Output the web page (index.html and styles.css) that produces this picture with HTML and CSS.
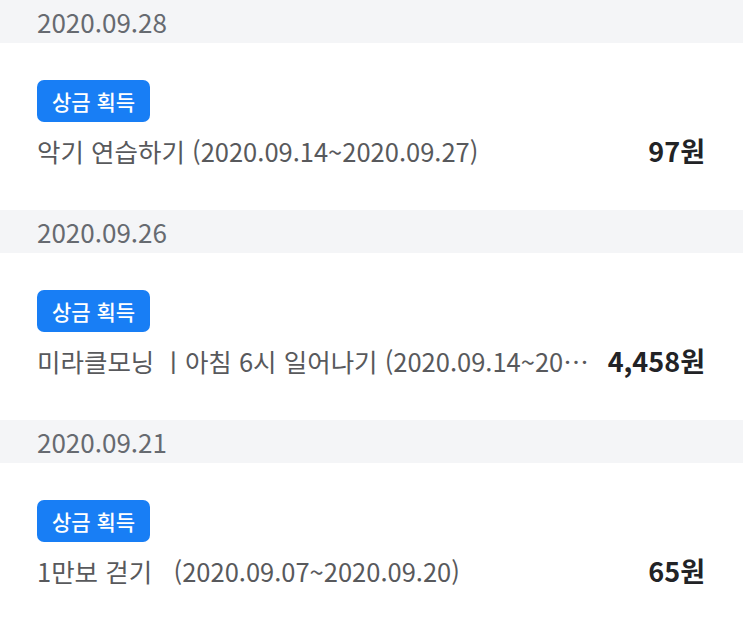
FILE: index.html
```html
<!DOCTYPE html>
<html lang="ko">
<head>
<meta charset="utf-8">
<link rel="stylesheet" href="styles.css">
</head>
<body>
<div class="list">
  <div class="date-header">2020.09.28</div>
  <div class="card">
    <span class="badge">상금 획득</span>
    <div class="row">
      <div class="title">악기 연습하기 (2020.09.14~2020.09.27)</div>
      <div class="amount">97원</div>
    </div>
  </div>
  <div class="date-header">2020.09.26</div>
  <div class="card">
    <span class="badge">상금 획득</span>
    <div class="row">
      <div class="title">미라클모닝 ㅣ아침 6시 일어나기 (2020.09.14~2020.09.27)</div>
      <div class="amount">4,458원</div>
    </div>
  </div>
  <div class="date-header">2020.09.21</div>
  <div class="card">
    <span class="badge">상금 획득</span>
    <div class="row">
      <div class="title">1만보 걷기&nbsp;&nbsp;&nbsp;(2020.09.07~2020.09.20)</div>
      <div class="amount">65원</div>
    </div>
  </div>
</div>
</body>
</html>
```
FILE: styles.css
```css
html, body {
  margin: 0;
  padding: 0;
  background: #ffffff;
}
body {
  font-family: "Noto Sans CJK KR", "Noto Sans", sans-serif;
  width: 743px;
  height: 630px;
  overflow: hidden;
}
.list {
  display: flex;
  flex-direction: column;
}
.date-header {
  height: 43px;
  background: #f4f5f7;
  color: #666a70;
  font-size: 26px;
  display: flex;
  align-items: center;
  padding-left: 37px;
  box-sizing: border-box;
}
.card {
  height: 167px;
  box-sizing: border-box;
  padding: 37px 37px 0 37px;
  display: flex;
  flex-direction: column;
  align-items: flex-start;
}
.badge {
  display: inline-flex;
  align-items: center;
  height: 42px;
  padding: 0 15px;
  background: #187ef5;
  color: #ffffff;
  border-radius: 7px;
  font-size: 21px;
  font-weight: 500;
  box-sizing: border-box;
}
.row {
  align-self: stretch;
  display: flex;
  align-items: center;
  margin-top: 8px;
  height: 40px;
}
.title {
  flex: 1;
  min-width: 0;
  white-space: nowrap;
  overflow: hidden;
  text-overflow: ellipsis;
  color: #58595c;
  font-size: 25.5px;
  margin-right: 12px;
}
.amount {
  flex: none;
  font-size: 27px;
  font-weight: 700;
  color: #222326;
  margin-right: 1px;
}
```
